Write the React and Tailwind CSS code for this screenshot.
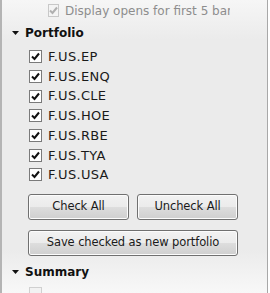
import { useState } from 'react';

const font = { fontFamily: '"DejaVu Sans", Tahoma, sans-serif' };

const Check = ({ checked, disabled }) => (
  <span
    className={`w-[13px] h-[13px] flex items-center justify-center border ${
      disabled ? 'border-[#c8c8c8] bg-[#f4f4f4]' : 'border-[#7a7a7a] bg-white'
    }`}
  >
    {checked && (
      <svg width="9" height="9" viewBox="0 0 9 9">
        <path
          d="M1 4.5 L3.5 7 L8 1.5"
          fill="none"
          stroke={disabled ? '#b0b0b0' : '#111'}
          strokeWidth="2"
        />
      </svg>
    )}
  </span>
);

const Triangle = () => (
  <svg width="7" height="4" viewBox="0 0 7 4">
    <path d="M0 0 L7 0 L3.5 4 Z" fill="#111" />
  </svg>
);

const Button = ({ children, className = '' }) => (
  <button
    className={`h-[26px] rounded-[3px] border border-[#707070] bg-[linear-gradient(to_bottom,#f2f2f2_0%,#ebebeb_50%,#dddddd_51%,#cfcfcf_100%)] text-[11.5px] tracking-[-0.1px] text-[#1a1a1a] shadow-[inset_0_0_0_1px_#fcfcfc] ${className}`}
  >
    {children}
  </button>
);

export default function App() {
  const symbols = ['F.US.EP', 'F.US.ENQ', 'F.US.CLE', 'F.US.HOE', 'F.US.RBE', 'F.US.TYA', 'F.US.USA'];
  const [checked, setChecked] = useState(symbols.map(() => true));

  return (
    <div
      className="w-[270px] h-[293px] overflow-hidden flex bg-white"
      style={font}
    >
      <div className="w-[268px] h-full border-l-2 border-r border-l-[#b4b4b4] border-r-[#a8a8a8] bg-[linear-gradient(to_bottom,#f6f6f6_0px,#ebebeb_40px,#ebebeb_250px,#f8f8f8_293px)] overflow-hidden">
        {/* disabled option */}
        <div className="flex items-center h-[20px] pl-[46px] pt-[1px] w-[228px] overflow-hidden whitespace-nowrap">
          <Check checked disabled />
          <span className="ml-[6px] text-[12px] text-[#8d8d8d]">Display opens for first 5 bars</span>
        </div>

        {/* Portfolio */}
        <div className="flex items-center h-[24px] mt-[1px] pl-[10px]">
          <Triangle />
          <span className="ml-[6px] text-[12px] font-bold text-[#111]">Portfolio</span>
        </div>

        <div className="flex flex-col pl-[27px] mt-[2px]">
          {symbols.map((s, i) => (
            <label key={s} className="flex items-center h-[19.7px] cursor-pointer">
              <span
                onClick={() => setChecked(checked.map((c, j) => (j === i ? !c : c)))}
              >
                <Check checked={checked[i]} />
              </span>
              <span className="ml-[6px] text-[13px] tracking-[0.3px] text-[#1a1a1a]">{s}</span>
            </label>
          ))}
        </div>

        <div className="pl-[26px] mt-[9px] flex flex-col gap-[10px]">
          <div className="flex gap-[8px]">
            <Button className="w-[101px]">Check All</Button>
            <Button className="w-[101px]">Uncheck All</Button>
          </div>
          <Button className="w-[210px]">Save checked as new portfolio</Button>
        </div>

        {/* Summary */}
        <div className="flex items-center h-[20px] mt-[6px] pl-[10px]">
          <Triangle />
          <span className="ml-[6px] text-[12px] font-bold text-[#111]">Summary</span>
        </div>
        <div className="pl-[27px] mt-[5px]">
          <span className="block w-[13px] h-[13px] border border-[#d0d0d0] bg-[#f2f2f2]" />
        </div>
      </div>
    </div>
  );
}
